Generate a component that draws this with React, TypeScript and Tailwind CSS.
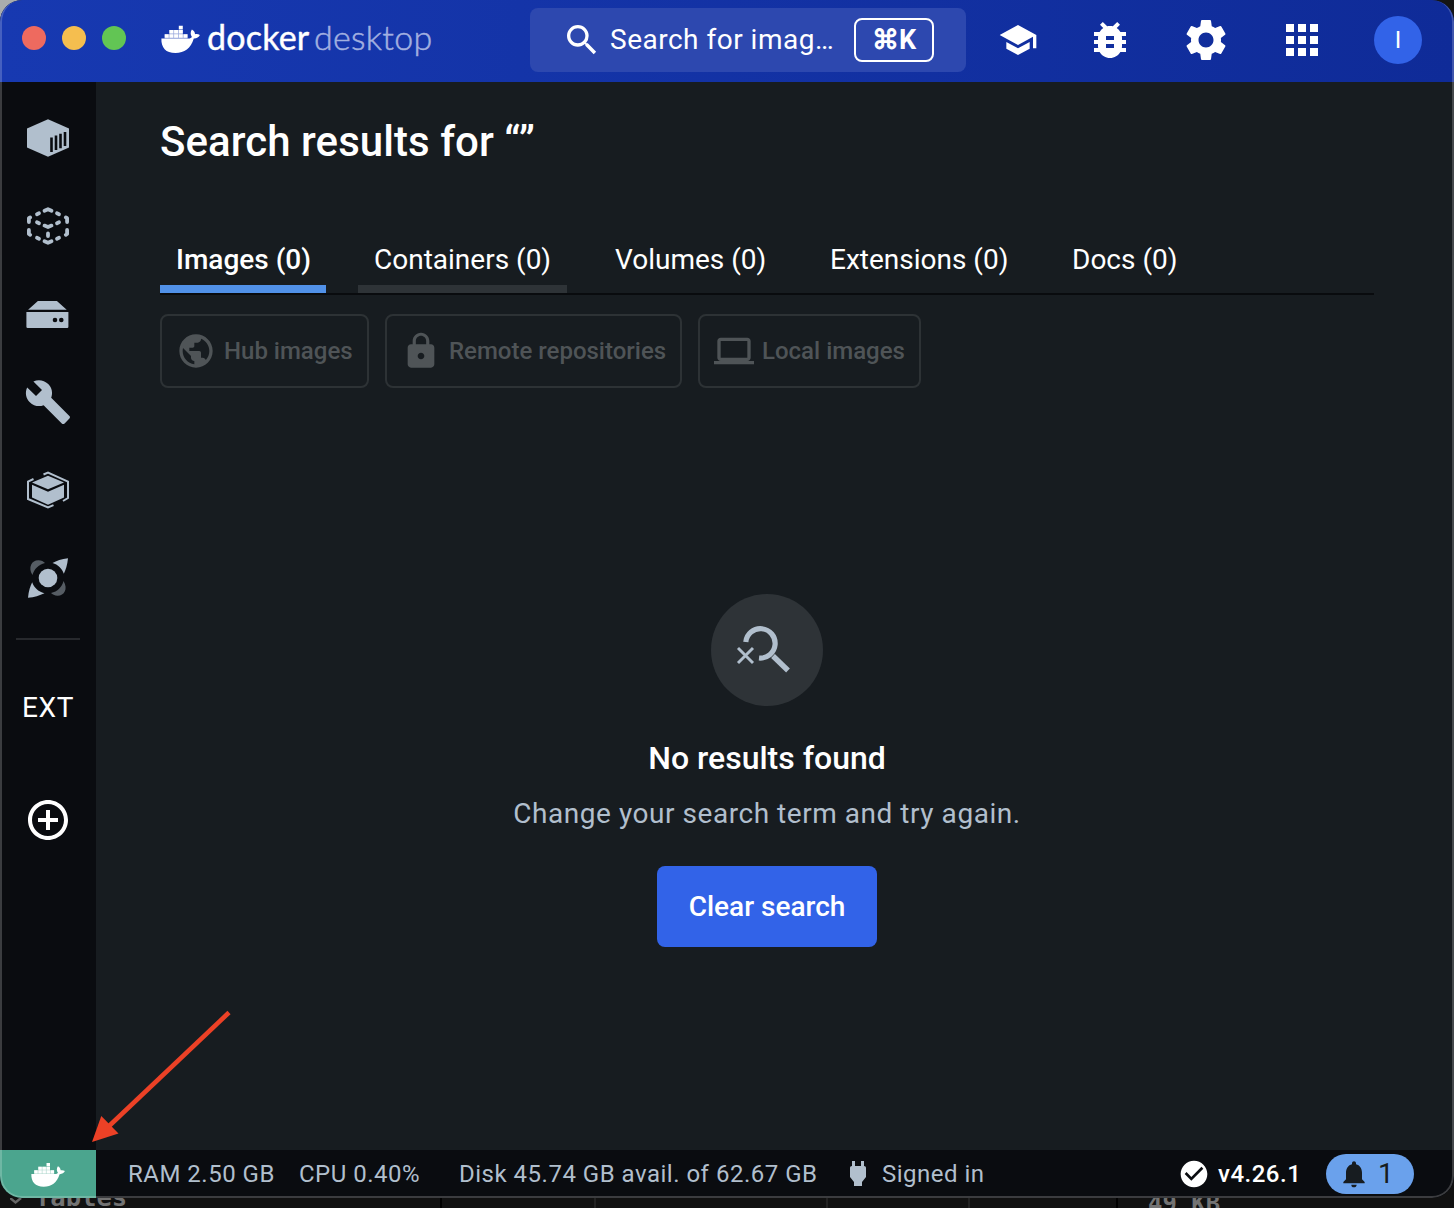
import React from 'react';
import {
  MdSearch, MdSchool, MdBugReport, MdSettings, MdApps, MdBuild,
  MdAddCircleOutline, MdPublic, MdLock, MdLaptop, MdNotifications, MdCheckCircle,
} from 'react-icons/md';

function Whale({ className }: { className: string }) {
  return (
    <svg viewBox="0 0 39 28" className={className} fill="currentColor">
      <path d="M.4 13.4H27.3c2 0 3.1-.6 3.6-1.5-1.7-2.2-1.6-5.3 0-7.4 2 1.200 3.100 2.900 3.100 4.700 1.700-.4 3.500-.1 4.900.9-1.100 2.400-3.300 3.600-6.100 3.500C29.800 23.500 23.400 28 14.500 28 4.800 28 0 22.500.4 13.400z" />
      <path d="M3.700 9.200h4v3.600h-4zM8.400 9.200h4v3.600h-4zM13.100 9.200h4v3.600h-4zM17.800 9.200h4v3.600h-4zM22.500 9.200h4v3.600h-4zM8.400 5h4v3.600h-4zM13.100 5h4v3.600h-4zM17.800 5h4v3.600h-4zM17.800.8h4v3.600h-4z" />
      <path opacity=".55" d="M3.700 9.200h22.800v4.200H3.700zM8.400 5h13.400v4.200H8.400z" />
    </svg>
  );
}

const ContainerIcon = () => (
  <svg viewBox="0 0 48 48" className="size-12">
    <path d="M24 5.300 45 14.500v19L24 42.700 3 33.500v-19z" fill="#b1bfcd" />
    <path d="M27.500 23.500V38M32 21.500V36M36.500 19.800V34.300M41 18V32" stroke="#0a0c10" strokeWidth="2.600" />
  </svg>
);

const ImageIcon = () => (
  <svg viewBox="0 0 48 48" className="size-12" fill="none" stroke="#b1bfcd" strokeWidth="3.800" strokeLinecap="round" strokeLinejoin="round">
    <path d="M20.500 8.700 24 7.200l3.500 1.500M20.500 39.300 24 40.800l3.500-1.500M4.900 20v-3.800l1.300-.8M43.100 20v-3.800l-1.300-.8M4.900 28v4l1.300.8M43.100 28v4l-1.300.8M13 12.200l2-.9M33 11.300l2 .9M13 35.800l2 .9M33 36.700l2-.9M13 20.300l2 .9M33 21.200l2-.9M20.500 23.600 24 25l3.500-1.400M24 31.500v2.500" />
  </svg>
);

const VolumeIcon = () => (
  <svg viewBox="0 0 48 48" className="size-12">
    <path d="M14.500 11h19L43.300 19.800H4.700zM3 22h42v14.700a1.200 1.200 0 0 1-1.200 1.200H4.200A1.200 1.200 0 0 1 3 36.700z" transform="translate(-.6 0)" fill="#b1bfcd" />
    <circle cx="31" cy="30" r="2.300" fill="#0a0c10" />
    <circle cx="37.300" cy="30" r="2.300" fill="#0a0c10" />
  </svg>
);

const DevEnvIcon = () => (
  <svg viewBox="0 0 48 48" className="size-12">
    <path d="M24 9.800 40 16.600 24 23.300 8 16.600zM8 18.800l16 6.900 16-6.900v12.600L24 38.700 8 31.400z" fill="#b1bfcd" />
    <path d="M9.500 13 4 15.600V33l20 8.500 5.500-2.300M19.500 8.500 24 6.500l20 9.100v16.400L39 35" fill="none" stroke="#b1bfcd" strokeWidth="2" />
  </svg>
);

const ScoutIcon = () => (
  <svg viewBox="0 0 48 48" className="size-12">
    <g fill="#565d64">
      <path d="M8.500 21C3.500 13 8 6 14.500 6.200c3 .1 5 1.300 6.500 2.700C14.500 10.500 10 15 8.500 21z" />
      <path d="M39.500 27C44.500 35 40 42 33.500 41.800c-3-.1-5-1.300-6.500-2.700 6.500-1.600 11-6.100 12.500-12.100z" />
    </g>
    <g fill="#b1bfcd">
      <circle cx="24" cy="24" r="9.300" />
      <path d="M44 4.200c-.6 6.800-2.400 12-4.200 15.600C38 14.500 34 10.500 28.500 9 32.500 6.700 37.500 4.800 44 4.200z" />
      <path d="M4 43.800c.6-6.800 2.400-12 4.200-15.600C10 33.500 14 37.500 20.500 39.200 15.500 41.500 10.500 43.200 4 43.800z" />
    </g>
  </svg>
);

const NoResultsIcon = () => (
  <svg viewBox="0 0 112 112" className="size-28" fill="none" stroke="#b1bfcd">
    <path d="M34.800 48A14.700 14.700 0 1 1 48 64" strokeWidth="5.200" />
    <path d="M62 62l15 14.500" strokeWidth="5.400" />
    <path d="M27 54l15 15M42 54 27 69" strokeWidth="2.900" />
  </svg>
);

const PlugIcon = () => (
  <svg viewBox="0 0 18 26" className="h-[26px] w-[18px]" fill="#b1bfcd">
    <path d="M3 0h3v5h6V0h3v5c1.300 0 2 .8 2 2v9l-4 5v4H5v-4L1 16V7c0-1.200.7-2 2-2z" />
  </svg>
);

const tabs = [
  { label: 'Images (0)', text: 'font-medium', bar: 'bg-[#5191e8]', w: 'w-[166px]' },
  { label: 'Containers (0)', text: '', bar: 'bg-[#2e3337]', w: 'w-[209px]' },
  { label: 'Volumes (0)', text: '', bar: '', w: 'w-[183px]' },
  { label: 'Extensions (0)', text: '', bar: '', w: 'w-[210px]' },
  { label: 'Docs (0)', text: '', bar: '', w: 'w-[137px]' },
];

const filters = [
  { label: 'Hub images', Icon: MdPublic, w: 'w-[209px]' },
  { label: 'Remote repositories', Icon: MdLock, w: 'w-[297px]' },
  { label: 'Local images', Icon: MdLaptop, w: 'w-[223px]' },
];

function Header() {
  return (
    <header className="flex h-[82px] shrink-0 items-start bg-linear-to-r from-[#1739b1] to-[#0f2b98] text-white">
      <div className="flex w-[530px] shrink-0 items-start pl-[22px]">
        <div className="flex gap-4 pt-[26px]">
          <span className="size-6 rounded-full bg-[#ee6a5f]" />
          <span className="size-6 rounded-full bg-[#f5be4f]" />
          <span className="size-6 rounded-full bg-[#62c554]" />
        </div>
        <Whale className="mt-[25px] ml-[35px] h-7 w-[39px]" />
        <div className="mt-[23px] ml-[7px] flex h-7 items-center gap-[5px] font-['Lato'] text-[34px] leading-7 whitespace-nowrap">
          <span className="w-[102px] tracking-[0.2px] [-webkit-text-stroke:0.4px_white]">docker</span>
          <span className="font-light tracking-[0.3px] text-[#a2b0e0] [-webkit-text-stroke:0.5px_#a2b0e0]">desktop</span>
        </div>
      </div>
      <div className="mt-2 flex h-16 w-[436px] shrink-0 items-center rounded-lg bg-[#2d48af] pl-8">
        <MdSearch className="size-10 shrink-0" />
        <span className="ml-2 w-[244px] text-[28px] tracking-[0.5px] whitespace-nowrap">Search for imag…</span>
        <span className="flex h-11 w-20 items-center justify-center rounded-lg border-2 border-white text-[27px] font-bold">⌘K</span>
      </div>
      <nav className="mt-4 ml-8 flex h-12 flex-1 items-center">
        <MdSchool className="size-10" />
        <MdBugReport className="ml-12 size-12" />
        <MdSettings className="-mr-px ml-[47px] size-[50px]" />
        <MdApps className="ml-12 size-12" />
        <span className="ml-12 flex size-12 items-center justify-center rounded-full bg-[#3263e8] text-2xl">I</span>
      </nav>
    </header>
  );
}

function Sidebar() {
  return (
    <aside className="flex w-24 shrink-0 flex-col items-center gap-10 bg-[#0a0c10] pt-8">
      <ContainerIcon />
      <ImageIcon />
      <VolumeIcon />
      <MdBuild className="size-12 text-[#b1bfcd]" />
      <DevEnvIcon />
      <ScoutIcon />
      <div className="-mt-1 h-0.5 w-16 bg-[#27292d]" />
      <span className="mt-[9px] flex h-[38px] items-center text-[28px] tracking-[0.6px] text-white">EXT</span>
      <MdAddCircleOutline className="mt-[29px] size-12 text-white" />
    </aside>
  );
}

function Results() {
  return (
    <main className="flex min-w-0 flex-1 flex-col bg-[#171c20] px-16">
      <h1 className="mt-8 h-14 text-[42px] leading-14 font-medium tracking-[0.05px] whitespace-nowrap text-white">Search results for “”</h1>
      <div className="mt-14 flex h-[69px] w-[1214px] gap-8 border-b-2 border-[#090b0e]">
        {tabs.map((t) => (
          <div key={t.label} className={`flex shrink-0 flex-col justify-between text-white ${t.w}`}>
            <span className={`pt-4 pl-4 text-[28px] leading-9 whitespace-nowrap ${t.text}`}>{t.label}</span>
            <span className={`h-2 ${t.bar}`} />
          </div>
        ))}
      </div>
      <div className="mt-[19px] flex gap-4">
        {filters.map(({ label, Icon, w }) => (
          <div key={label} className={`flex h-[74px] shrink-0 items-center gap-2 rounded-lg border-2 border-[#2d3235] pl-[14px] text-2xl font-medium whitespace-nowrap text-[#4f5457] ${w}`}>
            <Icon className="size-10 shrink-0" />
            {label}
          </div>
        ))}
      </div>
      <section className="mt-[206px] flex w-[1214px] flex-col items-center">
        <div className="rounded-full bg-[#2e3337]"><NoResultsIcon /></div>
        <h2 className="mt-8 text-[32px] leading-10 font-medium text-white">No results found</h2>
        <p className="mt-[18px] text-[28px] leading-9 tracking-[0.54px] text-[#b1bfcd]">Change your search term and try again.</p>
        <button className="mt-[34px] h-[81px] w-[220px] rounded-lg bg-[#3263e8] text-[28px] font-medium text-white">Clear search</button>
      </section>
    </main>
  );
}

function StatusBar() {
  return (
    <footer className="flex h-12 shrink-0 items-center bg-[#0a0c10] text-2xl tracking-[0.5px] whitespace-nowrap text-[#b1bfcd]">
      <div className="flex h-full w-24 items-center justify-center bg-[#4ba58e] text-white">
        <Whale className="h-[25px] w-[34px]" />
      </div>
      <span className="ml-8 w-[171px]">RAM 2.50 GB</span>
      <span className="w-40">CPU 0.40%</span>
      <span className="w-[390px]">Disk 45.74 GB avail. of 62.67 GB</span>
      <PlugIcon />
      <span className="ml-[15px]">Signed in</span>
      <MdCheckCircle className="ml-auto size-8 text-white" />
      <span className="ml-2 w-[108px] font-medium text-white">v4.26.1</span>
      <div className="mr-10 flex h-10 w-[88px] items-center rounded-full bg-[#6aa1ec] pl-3 text-[28px] text-[#171c20]">
        <MdNotifications className="size-8" />
        <span className="ml-2">1</span>
      </div>
    </footer>
  );
}

function Backdrop() {
  return (
    <div className="flex h-[10px] items-start overflow-hidden bg-[#111] font-['DejaVu_Sans_Mono'] text-2xl font-bold text-[#737373]">
      <svg className="ml-2.5 h-2 w-3" viewBox="0 0 12 8" fill="none" stroke="#666" strokeWidth="2.500"><path d="M0 0l5.500 4.500L11 0" /></svg>
      <span className="-mt-[15px] ml-[13px] w-[405px] text-[25.5px] leading-7">Tables</span>
      <span className="h-full w-[154px] border-l-2 border-black" />
      <span className="h-full w-[232px] border-l-2 border-[#222]" />
      <span className="h-full w-[142px] border-l-2 border-[#222]" />
      <span className="h-full w-[148px] border-l-2 border-[#222]" />
      <span className="h-full w-[22px] border-l-2 border-black" />
      <span className="-mt-[8px] ml-[10px] leading-7">49 KB</span>
    </div>
  );
}

export default function App() {
  return (
    <div className="h-[1208px] w-[1454px] overflow-hidden bg-linear-to-r from-[#a9adad] from-2% to-[#151515] to-2% font-['Roboto',sans-serif]">
      <div className="relative h-[1208px]">
        <div className="h-[1198px] bg-linear-to-b from-transparent from-2% to-[#111] to-2%">
          <div className="relative flex h-[1198px] flex-col overflow-hidden rounded-[22px] bg-[#0a0c10]">
            <Header />
            <div className="flex min-h-0 flex-1">
              <Sidebar />
              <Results />
            </div>
            <StatusBar />
            <div className="pointer-events-none absolute inset-0 rounded-[22px] border-x-2 border-b-2 border-white/20" />
          </div>
        </div>
        <Backdrop />
        <svg className="pointer-events-none absolute top-[1008px] left-[88px]" width="150" height="140" viewBox="0 0 150 140">
          <path d="M141 4.500 19 120" stroke="#ec4126" strokeWidth="4.600" />
          <path d="M4 134 13.300 108 30.500 125.500z" fill="#ec4126" />
        </svg>
      </div>
    </div>
  );
}
